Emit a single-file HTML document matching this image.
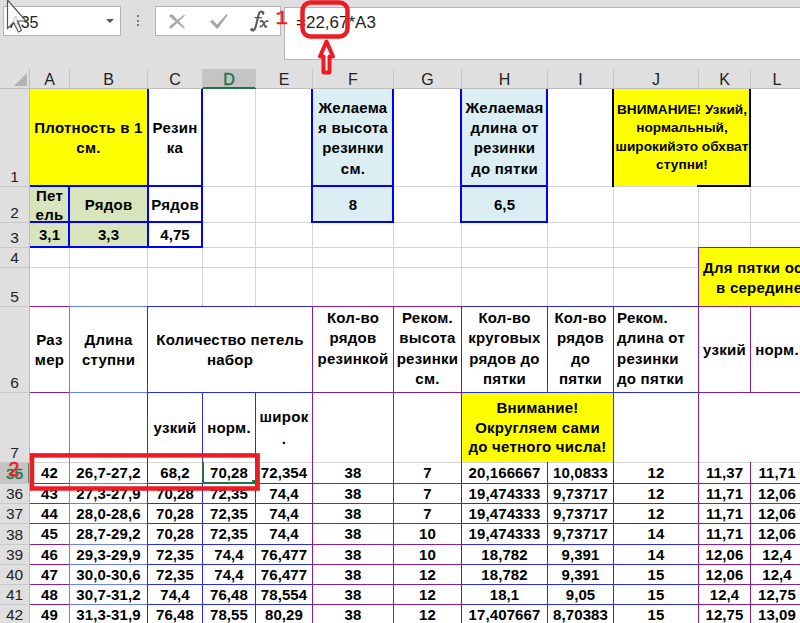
<!DOCTYPE html>
<html><head><meta charset="utf-8"><style>
html,body{margin:0;padding:0;}
body{width:800px;height:623px;position:relative;overflow:hidden;background:#dfdfdf;font-family:"Liberation Sans",sans-serif;}
div{position:absolute;}
.t{white-space:nowrap;}
.h{font-size:16px;line-height:20px;text-align:center;}
.rh{font-size:15.5px;line-height:20px;text-align:center;}
</style></head><body>
<div style="left:30px;top:89px;width:770px;height:534px;background:#ffffff;"></div>
<div style="left:69px;top:89px;width:1px;height:534px;background:#d4d4d4;"></div>
<div style="left:147px;top:89px;width:1px;height:534px;background:#d4d4d4;"></div>
<div style="left:202px;top:89px;width:1px;height:534px;background:#d4d4d4;"></div>
<div style="left:255px;top:89px;width:1px;height:534px;background:#d4d4d4;"></div>
<div style="left:312px;top:89px;width:1px;height:534px;background:#d4d4d4;"></div>
<div style="left:393px;top:89px;width:1px;height:534px;background:#d4d4d4;"></div>
<div style="left:461px;top:89px;width:1px;height:534px;background:#d4d4d4;"></div>
<div style="left:547px;top:89px;width:1px;height:534px;background:#d4d4d4;"></div>
<div style="left:613px;top:89px;width:1px;height:534px;background:#d4d4d4;"></div>
<div style="left:698px;top:89px;width:1px;height:534px;background:#d4d4d4;"></div>
<div style="left:750px;top:89px;width:1px;height:534px;background:#d4d4d4;"></div>
<div style="left:30px;top:186px;width:770px;height:1px;background:#d4d4d4;"></div>
<div style="left:30px;top:222px;width:770px;height:1px;background:#d4d4d4;"></div>
<div style="left:30px;top:247px;width:770px;height:1px;background:#d4d4d4;"></div>
<div style="left:30px;top:267px;width:770px;height:1px;background:#d4d4d4;"></div>
<div style="left:30px;top:306px;width:770px;height:1px;background:#d4d4d4;"></div>
<div style="left:30px;top:392px;width:770px;height:1px;background:#d4d4d4;"></div>
<div style="left:30px;top:462px;width:770px;height:1px;background:#d4d4d4;"></div>
<div style="left:30px;top:483px;width:770px;height:1px;background:#d4d4d4;"></div>
<div style="left:30px;top:503px;width:770px;height:1px;background:#d4d4d4;"></div>
<div style="left:30px;top:523px;width:770px;height:1px;background:#d4d4d4;"></div>
<div style="left:30px;top:544px;width:770px;height:1px;background:#d4d4d4;"></div>
<div style="left:30px;top:564px;width:770px;height:1px;background:#d4d4d4;"></div>
<div style="left:30px;top:584px;width:770px;height:1px;background:#d4d4d4;"></div>
<div style="left:30px;top:604px;width:770px;height:1px;background:#d4d4d4;"></div>
<div style="left:30px;top:89px;width:117px;height:97px;background:#ffff00;"></div>
<div style="left:30px;top:187px;width:39px;height:60px;background:#d8e4bc;"></div>
<div style="left:70px;top:187px;width:77px;height:60px;background:#d8e4bc;"></div>
<div style="left:313px;top:89px;width:80px;height:133px;background:#daeef3;"></div>
<div style="left:462px;top:89px;width:85px;height:133px;background:#daeef3;"></div>
<div style="left:614px;top:89px;width:136px;height:97px;background:#ffff00;"></div>
<div style="left:699px;top:248px;width:104px;height:58px;background:#ffff00;"></div>
<div style="left:148px;top:307px;width:164px;height:85px;background:#ffffff;"></div>
<div style="left:699px;top:393px;width:104px;height:69px;background:#ffffff;"></div>
<div style="left:462px;top:393px;width:151px;height:69px;background:#ffff00;"></div>
<div style="left:147px;top:89px;width:2px;height:159px;background:#0000ff;"></div>
<div style="left:201px;top:89px;width:2px;height:159px;background:#0000ff;"></div>
<div style="left:68px;top:185px;width:2px;height:63px;background:#0000ff;"></div>
<div style="left:28px;top:185px;width:175px;height:2px;background:#0000ff;"></div>
<div style="left:28px;top:221px;width:175px;height:2px;background:#0000ff;"></div>
<div style="left:28px;top:246px;width:175px;height:2px;background:#0000ff;"></div>
<div style="left:311px;top:89px;width:2px;height:134px;background:#0000ff;"></div>
<div style="left:392px;top:89px;width:2px;height:134px;background:#0000ff;"></div>
<div style="left:311px;top:185px;width:83px;height:2px;background:#0000ff;"></div>
<div style="left:311px;top:221px;width:83px;height:2px;background:#0000ff;"></div>
<div style="left:460px;top:89px;width:2px;height:134px;background:#0000ff;"></div>
<div style="left:546px;top:89px;width:2px;height:134px;background:#0000ff;"></div>
<div style="left:460px;top:185px;width:88px;height:2px;background:#0000ff;"></div>
<div style="left:460px;top:221px;width:88px;height:2px;background:#0000ff;"></div>
<div style="left:612px;top:89px;width:2px;height:98px;background:#000000;"></div>
<div style="left:749px;top:89px;width:2px;height:98px;background:#000000;"></div>
<div style="left:697px;top:185px;width:54px;height:2px;background:#000000;"></div>
<div style="left:698px;top:247px;width:1px;height:60px;background:#8e1d91;"></div>
<div style="left:698px;top:247px;width:102px;height:1px;background:#8e1d91;"></div>
<div style="left:29px;top:306px;width:41px;height:1px;background:#8e1d91;"></div>
<div style="left:69px;top:306px;width:79px;height:1px;background:#6b7cff;"></div>
<div style="left:147px;top:306px;width:166px;height:1px;background:#2b2bf0;"></div>
<div style="left:312px;top:306px;width:150px;height:1px;background:#8e1d91;"></div>
<div style="left:461px;top:306px;width:238px;height:1px;background:#2b2bf0;"></div>
<div style="left:698px;top:306px;width:102px;height:1px;background:#8e1d91;"></div>
<div style="left:29px;top:392px;width:41px;height:1px;background:#8e1d91;"></div>
<div style="left:69px;top:392px;width:79px;height:1px;background:#6b7cff;"></div>
<div style="left:147px;top:392px;width:166px;height:1px;background:#2b2bf0;"></div>
<div style="left:312px;top:392px;width:150px;height:1px;background:#8e1d91;"></div>
<div style="left:461px;top:392px;width:238px;height:1px;background:#2b2bf0;"></div>
<div style="left:698px;top:392px;width:102px;height:1px;background:#8e1d91;"></div>
<div style="left:29px;top:483px;width:41px;height:1px;background:#8e1d91;"></div>
<div style="left:69px;top:483px;width:79px;height:1px;background:#6b7cff;"></div>
<div style="left:147px;top:483px;width:166px;height:1px;background:#2b2bf0;"></div>
<div style="left:312px;top:483px;width:150px;height:1px;background:#8e1d91;"></div>
<div style="left:461px;top:483px;width:238px;height:1px;background:#2b2bf0;"></div>
<div style="left:698px;top:483px;width:102px;height:1px;background:#8e1d91;"></div>
<div style="left:29px;top:503px;width:41px;height:1px;background:#8e1d91;"></div>
<div style="left:69px;top:503px;width:79px;height:1px;background:#6b7cff;"></div>
<div style="left:147px;top:503px;width:166px;height:1px;background:#2b2bf0;"></div>
<div style="left:312px;top:503px;width:150px;height:1px;background:#8e1d91;"></div>
<div style="left:461px;top:503px;width:238px;height:1px;background:#2b2bf0;"></div>
<div style="left:698px;top:503px;width:102px;height:1px;background:#8e1d91;"></div>
<div style="left:29px;top:523px;width:41px;height:1px;background:#8e1d91;"></div>
<div style="left:69px;top:523px;width:79px;height:1px;background:#6b7cff;"></div>
<div style="left:147px;top:523px;width:166px;height:1px;background:#2b2bf0;"></div>
<div style="left:312px;top:523px;width:150px;height:1px;background:#8e1d91;"></div>
<div style="left:461px;top:523px;width:238px;height:1px;background:#2b2bf0;"></div>
<div style="left:698px;top:523px;width:102px;height:1px;background:#8e1d91;"></div>
<div style="left:29px;top:544px;width:41px;height:1px;background:#8e1d91;"></div>
<div style="left:69px;top:544px;width:79px;height:1px;background:#6b7cff;"></div>
<div style="left:147px;top:544px;width:166px;height:1px;background:#2b2bf0;"></div>
<div style="left:312px;top:544px;width:150px;height:1px;background:#8e1d91;"></div>
<div style="left:461px;top:544px;width:238px;height:1px;background:#2b2bf0;"></div>
<div style="left:698px;top:544px;width:102px;height:1px;background:#8e1d91;"></div>
<div style="left:29px;top:564px;width:41px;height:1px;background:#8e1d91;"></div>
<div style="left:69px;top:564px;width:79px;height:1px;background:#6b7cff;"></div>
<div style="left:147px;top:564px;width:166px;height:1px;background:#2b2bf0;"></div>
<div style="left:312px;top:564px;width:150px;height:1px;background:#8e1d91;"></div>
<div style="left:461px;top:564px;width:238px;height:1px;background:#2b2bf0;"></div>
<div style="left:698px;top:564px;width:102px;height:1px;background:#8e1d91;"></div>
<div style="left:29px;top:584px;width:41px;height:1px;background:#8e1d91;"></div>
<div style="left:69px;top:584px;width:79px;height:1px;background:#6b7cff;"></div>
<div style="left:147px;top:584px;width:166px;height:1px;background:#2b2bf0;"></div>
<div style="left:312px;top:584px;width:150px;height:1px;background:#8e1d91;"></div>
<div style="left:461px;top:584px;width:238px;height:1px;background:#2b2bf0;"></div>
<div style="left:698px;top:584px;width:102px;height:1px;background:#8e1d91;"></div>
<div style="left:29px;top:604px;width:41px;height:1px;background:#8e1d91;"></div>
<div style="left:69px;top:604px;width:79px;height:1px;background:#6b7cff;"></div>
<div style="left:147px;top:604px;width:166px;height:1px;background:#2b2bf0;"></div>
<div style="left:312px;top:604px;width:150px;height:1px;background:#8e1d91;"></div>
<div style="left:461px;top:604px;width:238px;height:1px;background:#2b2bf0;"></div>
<div style="left:698px;top:604px;width:102px;height:1px;background:#8e1d91;"></div>
<div style="left:69px;top:306px;width:1px;height:317px;background:#6b7cff;"></div>
<div style="left:147px;top:306px;width:1px;height:317px;background:#2b2bf0;"></div>
<div style="left:202px;top:392px;width:1px;height:231px;background:#2b2bf0;"></div>
<div style="left:255px;top:392px;width:1px;height:231px;background:#2b2bf0;"></div>
<div style="left:312px;top:306px;width:1px;height:317px;background:#8e1d91;"></div>
<div style="left:393px;top:306px;width:1px;height:317px;background:#8e1d91;"></div>
<div style="left:461px;top:306px;width:1px;height:317px;background:#2b2bf0;"></div>
<div style="left:547px;top:306px;width:1px;height:87px;background:#2b2bf0;"></div>
<div style="left:547px;top:462px;width:1px;height:161px;background:#2b2bf0;"></div>
<div style="left:613px;top:306px;width:1px;height:317px;background:#2b2bf0;"></div>
<div style="left:698px;top:306px;width:1px;height:317px;background:#8e1d91;"></div>
<div style="left:750px;top:306px;width:1px;height:87px;background:#8e1d91;"></div>
<div style="left:750px;top:462px;width:1px;height:161px;background:#8e1d91;"></div>
<div class="t" style="left:30px;top:117.5px;width:117px;font-size:15px;line-height:20px;text-align:center;font-weight:bold;color:#000;letter-spacing:0.25px;">Плотность в 1<br>см.</div>
<div class="t" style="left:148px;top:117.5px;width:54px;font-size:15px;line-height:20px;text-align:center;font-weight:bold;color:#000;letter-spacing:0.25px;">Резин<br>ка</div>
<div class="t" style="left:313px;top:97.9px;width:80px;font-size:15px;line-height:20.3px;text-align:center;font-weight:bold;color:#000;letter-spacing:0.25px;">Желаема<br>я высота<br>резинки<br>см.</div>
<div class="t" style="left:462px;top:97.9px;width:85px;font-size:15px;line-height:20.3px;text-align:center;font-weight:bold;color:#000;letter-spacing:0.25px;">Желаемая<br>длина от<br>резинки<br>до пятки</div>
<div class="t" style="left:614px;top:100.5px;width:136px;font-size:13.6px;line-height:18.5px;text-align:center;font-weight:bold;color:#000;letter-spacing:0.25px;letter-spacing:0.05px;">ВНИМАНИЕ! Узкий,<br>нормальный,<br>широкийэто обхват<br>ступни!</div>
<div class="t" style="left:30px;top:185.5px;width:39px;font-size:15px;line-height:19px;text-align:center;font-weight:bold;color:#000;letter-spacing:0.25px;">Пет<br>ель</div>
<div class="t" style="left:70px;top:194.5px;width:77px;font-size:15px;line-height:20px;text-align:center;font-weight:bold;color:#000;letter-spacing:0.25px;">Рядов</div>
<div class="t" style="left:148px;top:194.5px;width:54px;font-size:15px;line-height:20px;text-align:center;font-weight:bold;color:#000;letter-spacing:0.25px;">Рядов</div>
<div class="t" style="left:313px;top:194.5px;width:80px;font-size:15px;line-height:20px;text-align:center;font-weight:bold;color:#000;letter-spacing:0.1px;">8</div>
<div class="t" style="left:462px;top:194.5px;width:85px;font-size:15px;line-height:20px;text-align:center;font-weight:bold;color:#000;letter-spacing:0.1px;">6,5</div>
<div class="t" style="left:30px;top:225.0px;width:39px;font-size:15px;line-height:20px;text-align:center;font-weight:bold;color:#000;letter-spacing:0.1px;">3,1</div>
<div class="t" style="left:70px;top:225.0px;width:77px;font-size:15px;line-height:20px;text-align:center;font-weight:bold;color:#000;letter-spacing:0.1px;">3,3</div>
<div class="t" style="left:148px;top:225.0px;width:54px;font-size:15px;line-height:20px;text-align:center;font-weight:bold;color:#000;letter-spacing:0.1px;">4,75</div>
<div class="t" style="left:699px;top:258px;width:131px;font-size:15px;line-height:20px;text-align:left;font-weight:bold;color:#000;letter-spacing:0.25px;padding-left:4px;">Для пятки ос</div>
<div class="t" style="left:716px;top:278px;width:114px;font-size:15px;line-height:20px;text-align:left;font-weight:bold;color:#000;letter-spacing:0.25px;">в середине</div>
<div class="t" style="left:30px;top:329.5px;width:39px;font-size:15px;line-height:20px;text-align:center;font-weight:bold;color:#000;letter-spacing:0.25px;">Раз<br>мер</div>
<div class="t" style="left:70px;top:329.5px;width:77px;font-size:15px;line-height:20px;text-align:center;font-weight:bold;color:#000;letter-spacing:0.25px;">Длина<br>ступни</div>
<div class="t" style="left:148px;top:329.5px;width:164px;font-size:15px;line-height:20px;text-align:center;font-weight:bold;color:#000;letter-spacing:0.25px;">Количество петель<br>набор</div>
<div class="t" style="left:313px;top:308px;width:80px;font-size:15px;line-height:20.3px;text-align:center;font-weight:bold;color:#000;letter-spacing:0.25px;">Кол-во<br>рядов<br>резинкой</div>
<div class="t" style="left:394px;top:308px;width:67px;font-size:15px;line-height:20.3px;text-align:center;font-weight:bold;color:#000;letter-spacing:0.25px;">Реком.<br>высота<br>резинки<br>см.</div>
<div class="t" style="left:462px;top:308px;width:85px;font-size:15px;line-height:20.3px;text-align:center;font-weight:bold;color:#000;letter-spacing:0.25px;">Кол-во<br>круговых<br>рядов до<br>пятки</div>
<div class="t" style="left:548px;top:308px;width:65px;font-size:15px;line-height:20.3px;text-align:center;font-weight:bold;color:#000;letter-spacing:0.25px;">Кол-во<br>рядов<br>до<br>пятки</div>
<div class="t" style="left:614px;top:308px;width:84px;font-size:15px;line-height:20.3px;text-align:left;font-weight:bold;color:#000;letter-spacing:0.25px;padding-left:3px;box-sizing:border-box;">Реком.<br>длина от<br>резинки<br>до пятки</div>
<div class="t" style="left:699px;top:339.5px;width:51px;font-size:15px;line-height:20px;text-align:center;font-weight:bold;color:#000;letter-spacing:0.25px;">узкий</div>
<div class="t" style="left:751px;top:339.5px;width:52px;font-size:15px;line-height:20px;text-align:center;font-weight:bold;color:#000;letter-spacing:0.25px;">норм.</div>
<div class="t" style="left:148px;top:417.5px;width:54px;font-size:15px;line-height:20px;text-align:center;font-weight:bold;color:#000;letter-spacing:0.25px;">узкий</div>
<div class="t" style="left:203px;top:417.5px;width:52px;font-size:15px;line-height:20px;text-align:center;font-weight:bold;color:#000;letter-spacing:0.25px;">норм.</div>
<div class="t" style="left:256px;top:405.5px;width:56px;font-size:15px;line-height:22px;text-align:center;font-weight:bold;color:#000;letter-spacing:0.25px;">широк<br>.</div>
<div class="t" style="left:462px;top:398.25px;width:151px;font-size:15px;line-height:19.5px;text-align:center;font-weight:bold;color:#000;letter-spacing:0.25px;">Внимание!<br>Округляем сами<br>до четного числа!</div>
<div class="t" style="left:30px;top:463.0px;width:39px;font-size:15px;line-height:20px;text-align:center;font-weight:bold;color:#000;letter-spacing:0.1px;">42</div>
<div class="t" style="left:70px;top:463.0px;width:77px;font-size:15px;line-height:20px;text-align:center;font-weight:bold;color:#000;letter-spacing:0.1px;">26,7-27,2</div>
<div class="t" style="left:148px;top:463.0px;width:54px;font-size:15px;line-height:20px;text-align:center;font-weight:bold;color:#000;letter-spacing:0.1px;">68,2</div>
<div class="t" style="left:203px;top:463.0px;width:52px;font-size:15px;line-height:20px;text-align:center;font-weight:bold;color:#000;letter-spacing:0.1px;">70,28</div>
<div class="t" style="left:256px;top:463.0px;width:56px;font-size:15px;line-height:20px;text-align:center;font-weight:bold;color:#000;letter-spacing:0.1px;">72,354</div>
<div class="t" style="left:313px;top:463.0px;width:80px;font-size:15px;line-height:20px;text-align:center;font-weight:bold;color:#000;letter-spacing:0.1px;">38</div>
<div class="t" style="left:394px;top:463.0px;width:67px;font-size:15px;line-height:20px;text-align:center;font-weight:bold;color:#000;letter-spacing:0.1px;">7</div>
<div class="t" style="left:462px;top:463.0px;width:85px;font-size:15px;line-height:20px;text-align:center;font-weight:bold;color:#000;letter-spacing:0.1px;">20,166667</div>
<div class="t" style="left:548px;top:463.0px;width:65px;font-size:15px;line-height:20px;text-align:center;font-weight:bold;color:#000;letter-spacing:0.1px;">10,0833</div>
<div class="t" style="left:614px;top:463.0px;width:84px;font-size:15px;line-height:20px;text-align:center;font-weight:bold;color:#000;letter-spacing:0.1px;">12</div>
<div class="t" style="left:699px;top:463.0px;width:51px;font-size:15px;line-height:20px;text-align:center;font-weight:bold;color:#000;letter-spacing:0.1px;">11,37</div>
<div class="t" style="left:751px;top:463.0px;width:52px;font-size:15px;line-height:20px;text-align:center;font-weight:bold;color:#000;letter-spacing:0.1px;">11,71</div>
<div class="t" style="left:30px;top:483.5px;width:39px;font-size:15px;line-height:20px;text-align:center;font-weight:bold;color:#000;letter-spacing:0.1px;">43</div>
<div class="t" style="left:70px;top:483.5px;width:77px;font-size:15px;line-height:20px;text-align:center;font-weight:bold;color:#000;letter-spacing:0.1px;">27,3-27,9</div>
<div class="t" style="left:148px;top:483.5px;width:54px;font-size:15px;line-height:20px;text-align:center;font-weight:bold;color:#000;letter-spacing:0.1px;">70,28</div>
<div class="t" style="left:203px;top:483.5px;width:52px;font-size:15px;line-height:20px;text-align:center;font-weight:bold;color:#000;letter-spacing:0.1px;">72,35</div>
<div class="t" style="left:256px;top:483.5px;width:56px;font-size:15px;line-height:20px;text-align:center;font-weight:bold;color:#000;letter-spacing:0.1px;">74,4</div>
<div class="t" style="left:313px;top:483.5px;width:80px;font-size:15px;line-height:20px;text-align:center;font-weight:bold;color:#000;letter-spacing:0.1px;">38</div>
<div class="t" style="left:394px;top:483.5px;width:67px;font-size:15px;line-height:20px;text-align:center;font-weight:bold;color:#000;letter-spacing:0.1px;">7</div>
<div class="t" style="left:462px;top:483.5px;width:85px;font-size:15px;line-height:20px;text-align:center;font-weight:bold;color:#000;letter-spacing:0.1px;">19,474333</div>
<div class="t" style="left:548px;top:483.5px;width:65px;font-size:15px;line-height:20px;text-align:center;font-weight:bold;color:#000;letter-spacing:0.1px;">9,73717</div>
<div class="t" style="left:614px;top:483.5px;width:84px;font-size:15px;line-height:20px;text-align:center;font-weight:bold;color:#000;letter-spacing:0.1px;">12</div>
<div class="t" style="left:699px;top:483.5px;width:51px;font-size:15px;line-height:20px;text-align:center;font-weight:bold;color:#000;letter-spacing:0.1px;">11,71</div>
<div class="t" style="left:751px;top:483.5px;width:52px;font-size:15px;line-height:20px;text-align:center;font-weight:bold;color:#000;letter-spacing:0.1px;">12,06</div>
<div class="t" style="left:30px;top:503.5px;width:39px;font-size:15px;line-height:20px;text-align:center;font-weight:bold;color:#000;letter-spacing:0.1px;">44</div>
<div class="t" style="left:70px;top:503.5px;width:77px;font-size:15px;line-height:20px;text-align:center;font-weight:bold;color:#000;letter-spacing:0.1px;">28,0-28,6</div>
<div class="t" style="left:148px;top:503.5px;width:54px;font-size:15px;line-height:20px;text-align:center;font-weight:bold;color:#000;letter-spacing:0.1px;">70,28</div>
<div class="t" style="left:203px;top:503.5px;width:52px;font-size:15px;line-height:20px;text-align:center;font-weight:bold;color:#000;letter-spacing:0.1px;">72,35</div>
<div class="t" style="left:256px;top:503.5px;width:56px;font-size:15px;line-height:20px;text-align:center;font-weight:bold;color:#000;letter-spacing:0.1px;">74,4</div>
<div class="t" style="left:313px;top:503.5px;width:80px;font-size:15px;line-height:20px;text-align:center;font-weight:bold;color:#000;letter-spacing:0.1px;">38</div>
<div class="t" style="left:394px;top:503.5px;width:67px;font-size:15px;line-height:20px;text-align:center;font-weight:bold;color:#000;letter-spacing:0.1px;">7</div>
<div class="t" style="left:462px;top:503.5px;width:85px;font-size:15px;line-height:20px;text-align:center;font-weight:bold;color:#000;letter-spacing:0.1px;">19,474333</div>
<div class="t" style="left:548px;top:503.5px;width:65px;font-size:15px;line-height:20px;text-align:center;font-weight:bold;color:#000;letter-spacing:0.1px;">9,73717</div>
<div class="t" style="left:614px;top:503.5px;width:84px;font-size:15px;line-height:20px;text-align:center;font-weight:bold;color:#000;letter-spacing:0.1px;">12</div>
<div class="t" style="left:699px;top:503.5px;width:51px;font-size:15px;line-height:20px;text-align:center;font-weight:bold;color:#000;letter-spacing:0.1px;">11,71</div>
<div class="t" style="left:751px;top:503.5px;width:52px;font-size:15px;line-height:20px;text-align:center;font-weight:bold;color:#000;letter-spacing:0.1px;">12,06</div>
<div class="t" style="left:30px;top:524.0px;width:39px;font-size:15px;line-height:20px;text-align:center;font-weight:bold;color:#000;letter-spacing:0.1px;">45</div>
<div class="t" style="left:70px;top:524.0px;width:77px;font-size:15px;line-height:20px;text-align:center;font-weight:bold;color:#000;letter-spacing:0.1px;">28,7-29,2</div>
<div class="t" style="left:148px;top:524.0px;width:54px;font-size:15px;line-height:20px;text-align:center;font-weight:bold;color:#000;letter-spacing:0.1px;">70,28</div>
<div class="t" style="left:203px;top:524.0px;width:52px;font-size:15px;line-height:20px;text-align:center;font-weight:bold;color:#000;letter-spacing:0.1px;">72,35</div>
<div class="t" style="left:256px;top:524.0px;width:56px;font-size:15px;line-height:20px;text-align:center;font-weight:bold;color:#000;letter-spacing:0.1px;">74,4</div>
<div class="t" style="left:313px;top:524.0px;width:80px;font-size:15px;line-height:20px;text-align:center;font-weight:bold;color:#000;letter-spacing:0.1px;">38</div>
<div class="t" style="left:394px;top:524.0px;width:67px;font-size:15px;line-height:20px;text-align:center;font-weight:bold;color:#000;letter-spacing:0.1px;">10</div>
<div class="t" style="left:462px;top:524.0px;width:85px;font-size:15px;line-height:20px;text-align:center;font-weight:bold;color:#000;letter-spacing:0.1px;">19,474333</div>
<div class="t" style="left:548px;top:524.0px;width:65px;font-size:15px;line-height:20px;text-align:center;font-weight:bold;color:#000;letter-spacing:0.1px;">9,73717</div>
<div class="t" style="left:614px;top:524.0px;width:84px;font-size:15px;line-height:20px;text-align:center;font-weight:bold;color:#000;letter-spacing:0.1px;">14</div>
<div class="t" style="left:699px;top:524.0px;width:51px;font-size:15px;line-height:20px;text-align:center;font-weight:bold;color:#000;letter-spacing:0.1px;">11,71</div>
<div class="t" style="left:751px;top:524.0px;width:52px;font-size:15px;line-height:20px;text-align:center;font-weight:bold;color:#000;letter-spacing:0.1px;">12,06</div>
<div class="t" style="left:30px;top:544.5px;width:39px;font-size:15px;line-height:20px;text-align:center;font-weight:bold;color:#000;letter-spacing:0.1px;">46</div>
<div class="t" style="left:70px;top:544.5px;width:77px;font-size:15px;line-height:20px;text-align:center;font-weight:bold;color:#000;letter-spacing:0.1px;">29,3-29,9</div>
<div class="t" style="left:148px;top:544.5px;width:54px;font-size:15px;line-height:20px;text-align:center;font-weight:bold;color:#000;letter-spacing:0.1px;">72,35</div>
<div class="t" style="left:203px;top:544.5px;width:52px;font-size:15px;line-height:20px;text-align:center;font-weight:bold;color:#000;letter-spacing:0.1px;">74,4</div>
<div class="t" style="left:256px;top:544.5px;width:56px;font-size:15px;line-height:20px;text-align:center;font-weight:bold;color:#000;letter-spacing:0.1px;">76,477</div>
<div class="t" style="left:313px;top:544.5px;width:80px;font-size:15px;line-height:20px;text-align:center;font-weight:bold;color:#000;letter-spacing:0.1px;">38</div>
<div class="t" style="left:394px;top:544.5px;width:67px;font-size:15px;line-height:20px;text-align:center;font-weight:bold;color:#000;letter-spacing:0.1px;">10</div>
<div class="t" style="left:462px;top:544.5px;width:85px;font-size:15px;line-height:20px;text-align:center;font-weight:bold;color:#000;letter-spacing:0.1px;">18,782</div>
<div class="t" style="left:548px;top:544.5px;width:65px;font-size:15px;line-height:20px;text-align:center;font-weight:bold;color:#000;letter-spacing:0.1px;">9,391</div>
<div class="t" style="left:614px;top:544.5px;width:84px;font-size:15px;line-height:20px;text-align:center;font-weight:bold;color:#000;letter-spacing:0.1px;">14</div>
<div class="t" style="left:699px;top:544.5px;width:51px;font-size:15px;line-height:20px;text-align:center;font-weight:bold;color:#000;letter-spacing:0.1px;">12,06</div>
<div class="t" style="left:751px;top:544.5px;width:52px;font-size:15px;line-height:20px;text-align:center;font-weight:bold;color:#000;letter-spacing:0.1px;">12,4</div>
<div class="t" style="left:30px;top:564.5px;width:39px;font-size:15px;line-height:20px;text-align:center;font-weight:bold;color:#000;letter-spacing:0.1px;">47</div>
<div class="t" style="left:70px;top:564.5px;width:77px;font-size:15px;line-height:20px;text-align:center;font-weight:bold;color:#000;letter-spacing:0.1px;">30,0-30,6</div>
<div class="t" style="left:148px;top:564.5px;width:54px;font-size:15px;line-height:20px;text-align:center;font-weight:bold;color:#000;letter-spacing:0.1px;">72,35</div>
<div class="t" style="left:203px;top:564.5px;width:52px;font-size:15px;line-height:20px;text-align:center;font-weight:bold;color:#000;letter-spacing:0.1px;">74,4</div>
<div class="t" style="left:256px;top:564.5px;width:56px;font-size:15px;line-height:20px;text-align:center;font-weight:bold;color:#000;letter-spacing:0.1px;">76,477</div>
<div class="t" style="left:313px;top:564.5px;width:80px;font-size:15px;line-height:20px;text-align:center;font-weight:bold;color:#000;letter-spacing:0.1px;">38</div>
<div class="t" style="left:394px;top:564.5px;width:67px;font-size:15px;line-height:20px;text-align:center;font-weight:bold;color:#000;letter-spacing:0.1px;">12</div>
<div class="t" style="left:462px;top:564.5px;width:85px;font-size:15px;line-height:20px;text-align:center;font-weight:bold;color:#000;letter-spacing:0.1px;">18,782</div>
<div class="t" style="left:548px;top:564.5px;width:65px;font-size:15px;line-height:20px;text-align:center;font-weight:bold;color:#000;letter-spacing:0.1px;">9,391</div>
<div class="t" style="left:614px;top:564.5px;width:84px;font-size:15px;line-height:20px;text-align:center;font-weight:bold;color:#000;letter-spacing:0.1px;">15</div>
<div class="t" style="left:699px;top:564.5px;width:51px;font-size:15px;line-height:20px;text-align:center;font-weight:bold;color:#000;letter-spacing:0.1px;">12,06</div>
<div class="t" style="left:751px;top:564.5px;width:52px;font-size:15px;line-height:20px;text-align:center;font-weight:bold;color:#000;letter-spacing:0.1px;">12,4</div>
<div class="t" style="left:30px;top:584.5px;width:39px;font-size:15px;line-height:20px;text-align:center;font-weight:bold;color:#000;letter-spacing:0.1px;">48</div>
<div class="t" style="left:70px;top:584.5px;width:77px;font-size:15px;line-height:20px;text-align:center;font-weight:bold;color:#000;letter-spacing:0.1px;">30,7-31,2</div>
<div class="t" style="left:148px;top:584.5px;width:54px;font-size:15px;line-height:20px;text-align:center;font-weight:bold;color:#000;letter-spacing:0.1px;">74,4</div>
<div class="t" style="left:203px;top:584.5px;width:52px;font-size:15px;line-height:20px;text-align:center;font-weight:bold;color:#000;letter-spacing:0.1px;">76,48</div>
<div class="t" style="left:256px;top:584.5px;width:56px;font-size:15px;line-height:20px;text-align:center;font-weight:bold;color:#000;letter-spacing:0.1px;">78,554</div>
<div class="t" style="left:313px;top:584.5px;width:80px;font-size:15px;line-height:20px;text-align:center;font-weight:bold;color:#000;letter-spacing:0.1px;">38</div>
<div class="t" style="left:394px;top:584.5px;width:67px;font-size:15px;line-height:20px;text-align:center;font-weight:bold;color:#000;letter-spacing:0.1px;">12</div>
<div class="t" style="left:462px;top:584.5px;width:85px;font-size:15px;line-height:20px;text-align:center;font-weight:bold;color:#000;letter-spacing:0.1px;">18,1</div>
<div class="t" style="left:548px;top:584.5px;width:65px;font-size:15px;line-height:20px;text-align:center;font-weight:bold;color:#000;letter-spacing:0.1px;">9,05</div>
<div class="t" style="left:614px;top:584.5px;width:84px;font-size:15px;line-height:20px;text-align:center;font-weight:bold;color:#000;letter-spacing:0.1px;">15</div>
<div class="t" style="left:699px;top:584.5px;width:51px;font-size:15px;line-height:20px;text-align:center;font-weight:bold;color:#000;letter-spacing:0.1px;">12,4</div>
<div class="t" style="left:751px;top:584.5px;width:52px;font-size:15px;line-height:20px;text-align:center;font-weight:bold;color:#000;letter-spacing:0.1px;">12,75</div>
<div class="t" style="left:30px;top:604.5px;width:39px;font-size:15px;line-height:20px;text-align:center;font-weight:bold;color:#000;letter-spacing:0.1px;">49</div>
<div class="t" style="left:70px;top:604.5px;width:77px;font-size:15px;line-height:20px;text-align:center;font-weight:bold;color:#000;letter-spacing:0.1px;">31,3-31,9</div>
<div class="t" style="left:148px;top:604.5px;width:54px;font-size:15px;line-height:20px;text-align:center;font-weight:bold;color:#000;letter-spacing:0.1px;">76,48</div>
<div class="t" style="left:203px;top:604.5px;width:52px;font-size:15px;line-height:20px;text-align:center;font-weight:bold;color:#000;letter-spacing:0.1px;">78,55</div>
<div class="t" style="left:256px;top:604.5px;width:56px;font-size:15px;line-height:20px;text-align:center;font-weight:bold;color:#000;letter-spacing:0.1px;">80,29</div>
<div class="t" style="left:313px;top:604.5px;width:80px;font-size:15px;line-height:20px;text-align:center;font-weight:bold;color:#000;letter-spacing:0.1px;">38</div>
<div class="t" style="left:394px;top:604.5px;width:67px;font-size:15px;line-height:20px;text-align:center;font-weight:bold;color:#000;letter-spacing:0.1px;">12</div>
<div class="t" style="left:462px;top:604.5px;width:85px;font-size:15px;line-height:20px;text-align:center;font-weight:bold;color:#000;letter-spacing:0.1px;">17,407667</div>
<div class="t" style="left:548px;top:604.5px;width:65px;font-size:15px;line-height:20px;text-align:center;font-weight:bold;color:#000;letter-spacing:0.1px;">8,70383</div>
<div class="t" style="left:614px;top:604.5px;width:84px;font-size:15px;line-height:20px;text-align:center;font-weight:bold;color:#000;letter-spacing:0.1px;">15</div>
<div class="t" style="left:699px;top:604.5px;width:51px;font-size:15px;line-height:20px;text-align:center;font-weight:bold;color:#000;letter-spacing:0.1px;">12,75</div>
<div class="t" style="left:751px;top:604.5px;width:52px;font-size:15px;line-height:20px;text-align:center;font-weight:bold;color:#000;letter-spacing:0.1px;">13,09</div>
<div style="left:202px;top:462px;width:2px;height:22px;background:#217346;"></div>
<div style="left:202px;top:482px;width:54px;height:2px;background:#217346;"></div>
<div style="left:255px;top:462px;width:1px;height:22px;background:#217346;"></div>
<div style="left:252px;top:480px;width:4px;height:4px;background:#217346;"></div>
<div style="left:0;top:69px;width:800px;height:20px;background:#dfdfdf"></div>
<div style="left:0;top:89px;width:30px;height:534px;background:#dfdfdf"></div>
<div style="left:0;top:88px;width:800px;height:1px;background:#bdbdbd"></div>
<div style="left:29px;top:69px;width:1px;height:554px;background:#bdbdbd"></div>
<svg style="position:absolute;left:0;top:69px" width="30" height="20"><polygon points="27,4 27,17 14,17" fill="#b3b3b3"/></svg>
<div style="left:202px;top:69px;width:53px;height:19px;background:#c4c4c4"></div>
<div style="left:202px;top:87px;width:54px;height:2px;background:#217346"></div>
<div class="h" style="left:30px;top:70px;width:39px;color:#222;">A</div>
<div style="left:69px;top:69px;width:1px;height:19px;background:#c8c8c8"></div>
<div class="h" style="left:70px;top:70px;width:77px;color:#222;">B</div>
<div style="left:147px;top:69px;width:1px;height:19px;background:#c8c8c8"></div>
<div class="h" style="left:148px;top:70px;width:54px;color:#222;">C</div>
<div style="left:202px;top:69px;width:1px;height:19px;background:#c8c8c8"></div>
<div class="h" style="left:203px;top:70px;width:52px;color:#217346;-webkit-text-stroke:0.4px #217346;">D</div>
<div style="left:255px;top:69px;width:1px;height:19px;background:#c8c8c8"></div>
<div class="h" style="left:256px;top:70px;width:56px;color:#222;">E</div>
<div style="left:312px;top:69px;width:1px;height:19px;background:#c8c8c8"></div>
<div class="h" style="left:313px;top:70px;width:80px;color:#222;">F</div>
<div style="left:393px;top:69px;width:1px;height:19px;background:#c8c8c8"></div>
<div class="h" style="left:394px;top:70px;width:67px;color:#222;">G</div>
<div style="left:461px;top:69px;width:1px;height:19px;background:#c8c8c8"></div>
<div class="h" style="left:462px;top:70px;width:85px;color:#222;">H</div>
<div style="left:547px;top:69px;width:1px;height:19px;background:#c8c8c8"></div>
<div class="h" style="left:548px;top:70px;width:65px;color:#222;">I</div>
<div style="left:613px;top:69px;width:1px;height:19px;background:#c8c8c8"></div>
<div class="h" style="left:614px;top:70px;width:84px;color:#222;">J</div>
<div style="left:698px;top:69px;width:1px;height:19px;background:#c8c8c8"></div>
<div class="h" style="left:699px;top:70px;width:51px;color:#222;">K</div>
<div style="left:750px;top:69px;width:1px;height:19px;background:#c8c8c8"></div>
<div class="h" style="left:751px;top:70px;width:52px;color:#222;">L</div>
<div style="left:0;top:186px;width:29px;height:1px;background:#c8c8c8"></div>
<div class="rh" style="left:0;top:167px;width:29px;color:#222;">1</div>
<div style="left:0;top:222px;width:29px;height:1px;background:#c8c8c8"></div>
<div class="rh" style="left:0;top:203px;width:29px;color:#222;">2</div>
<div style="left:0;top:247px;width:29px;height:1px;background:#c8c8c8"></div>
<div class="rh" style="left:0;top:228px;width:29px;color:#222;">3</div>
<div style="left:0;top:267px;width:29px;height:1px;background:#c8c8c8"></div>
<div class="rh" style="left:0;top:248px;width:29px;color:#222;">4</div>
<div style="left:0;top:306px;width:29px;height:1px;background:#c8c8c8"></div>
<div class="rh" style="left:0;top:287px;width:29px;color:#222;">5</div>
<div style="left:0;top:392px;width:29px;height:1px;background:#c8c8c8"></div>
<div class="rh" style="left:0;top:373px;width:29px;color:#222;">6</div>
<div style="left:0;top:462px;width:29px;height:1px;background:#c8c8c8"></div>
<div class="rh" style="left:0;top:443px;width:29px;color:#222;">7</div>
<div style="left:0;top:463px;width:29px;height:20px;background:#c4c4c4"></div>
<div style="left:28px;top:463px;width:1px;height:20px;background:#5a8a6a"></div>
<div style="left:0;top:483px;width:29px;height:1px;background:#c8c8c8"></div>
<div class="rh" style="left:0;top:464px;width:29px;color:#217346;-webkit-text-stroke:0.4px #217346;">35</div>
<div style="left:0;top:503px;width:29px;height:1px;background:#c8c8c8"></div>
<div class="rh" style="left:0;top:484px;width:29px;color:#222;">36</div>
<div style="left:0;top:523px;width:29px;height:1px;background:#c8c8c8"></div>
<div class="rh" style="left:0;top:504px;width:29px;color:#222;">37</div>
<div style="left:0;top:544px;width:29px;height:1px;background:#c8c8c8"></div>
<div class="rh" style="left:0;top:525px;width:29px;color:#222;">38</div>
<div style="left:0;top:564px;width:29px;height:1px;background:#c8c8c8"></div>
<div class="rh" style="left:0;top:545px;width:29px;color:#222;">39</div>
<div style="left:0;top:584px;width:29px;height:1px;background:#c8c8c8"></div>
<div class="rh" style="left:0;top:565px;width:29px;color:#222;">40</div>
<div style="left:0;top:604px;width:29px;height:1px;background:#c8c8c8"></div>
<div class="rh" style="left:0;top:585px;width:29px;color:#222;">41</div>
<div style="left:0;top:624px;width:29px;height:1px;background:#c8c8c8"></div>
<div class="rh" style="left:0;top:605px;width:29px;color:#222;">42</div>
<!-- toolbar -->
<div style="left:3px;top:6px;width:116px;height:28px;background:#fff;border:1px solid #b4b4b4"></div>

<svg style="position:absolute;left:104px;top:17px" width="12" height="8"><polygon points="2,2 10,2 6,6" fill="#555"/></svg>
<div style="left:136.5px;top:15px;width:2px;height:2px;border-radius:1px;background:#555"></div>
<div style="left:136.5px;top:19.5px;width:2px;height:2px;border-radius:1px;background:#555"></div>
<div style="left:136.5px;top:24px;width:2px;height:2px;border-radius:1px;background:#555"></div>
<div style="left:155px;top:6px;width:124px;height:28px;background:#fff;border:1px solid #b4b4b4"></div>
<svg style="position:absolute;left:0;top:0" width="240" height="40"><path d="M168.8,16 L171,14.2 L173,15 L185,27.8 L183.8,28.5 Z" fill="#a8a8a8"/><path d="M184,14.8 L185,15.6 L172.5,27.6 L170.5,28.8 L169,27.5 L170,25.8 Z" fill="#a8a8a8"/><path d="M210,21.5 L212.5,19.8 L217,24.5 L226.5,14 L227.5,15.5 L218,28.5 L216.5,28.5 Z" fill="#a8a8a8"/></svg>

<svg style="position:absolute;left:0;top:0" width="280" height="40"><g fill="none" stroke="#5a5a5a" stroke-linecap="round">
<path d="M263.2,12.6 C262.6,11.2 260.3,10.9 259.2,13 C258.2,15 256.6,24 255.4,27.6 C254.6,30.6 252.6,31.2 251.4,29.8" stroke-width="2.1"/>
<path d="M255,17.6 L261.6,17.6" stroke-width="1.1"/>
<path d="M260.6,21.2 C262.5,20.6 263.6,22 264.2,24.5 C264.7,26.5 265.6,27.2 266.4,26.6" stroke-width="1.9"/>
<path d="M267.6,20.9 C266.5,20.6 265.3,21.3 263.6,23.8 C262.2,26 261.2,26.8 260.3,26.4" stroke-width="1.4"/>
</g><g fill="#5a5a5a"><circle cx="263" cy="13.4" r="1.3"/><circle cx="251.9" cy="29.2" r="1.3"/><circle cx="267.4" cy="21.2" r="0.9"/><circle cx="260.6" cy="26.5" r="0.9"/></g></svg>
<div style="left:284px;top:7px;width:516px;height:51px;background:#fff;border:1px solid #b4b4b4;border-right:none"></div>
<div style="left:296px;top:12px;font-size:17px;line-height:22px;color:#222">=22,67*A3</div>
<div style="left:275.5px;top:8px;font-family:'Liberation Mono',monospace;font-size:20.5px;line-height:22px;color:#ed1c24;-webkit-text-stroke:0.5px #ed1c24">1</div>

<svg style="position:absolute;left:0;top:0" width="800" height="623">
<rect x="302.5" y="2.5" width="45" height="34" rx="8" ry="8" fill="none" stroke="#ed1c24" stroke-width="4.5"/>
<path d="M326.5,41.5 L333,56.5 L329.5,56.5 L329.5,72.5 L323.5,72.5 L323.5,56.5 L320,56.5 Z" fill="#fff" stroke="#ed1c24" stroke-width="4" stroke-linejoin="round"/>
<rect x="32" y="455.4" width="225.6" height="33.1" fill="none" stroke="#ed1c24" stroke-width="4.5"/>
</svg>
<div style="left:8.5px;top:458px;font-size:19.5px;line-height:22px;color:#ed1c24;-webkit-text-stroke:0.6px #ed1c24">2</div>
<!-- cursor -->
<div style="left:10px;top:13px;font-size:16px;line-height:20px;color:#222">A35</div>
<svg style="position:absolute;left:0;top:0" width="40" height="40"><path d="M7.5,0 L7.5,28.5 L13.5,22.5 L18.5,32 L21.5,30.5 L17.5,21 L26,21 Z" fill="rgba(255,255,255,0.8)" stroke="#555" stroke-width="1.2"/></svg>

</body></html>
